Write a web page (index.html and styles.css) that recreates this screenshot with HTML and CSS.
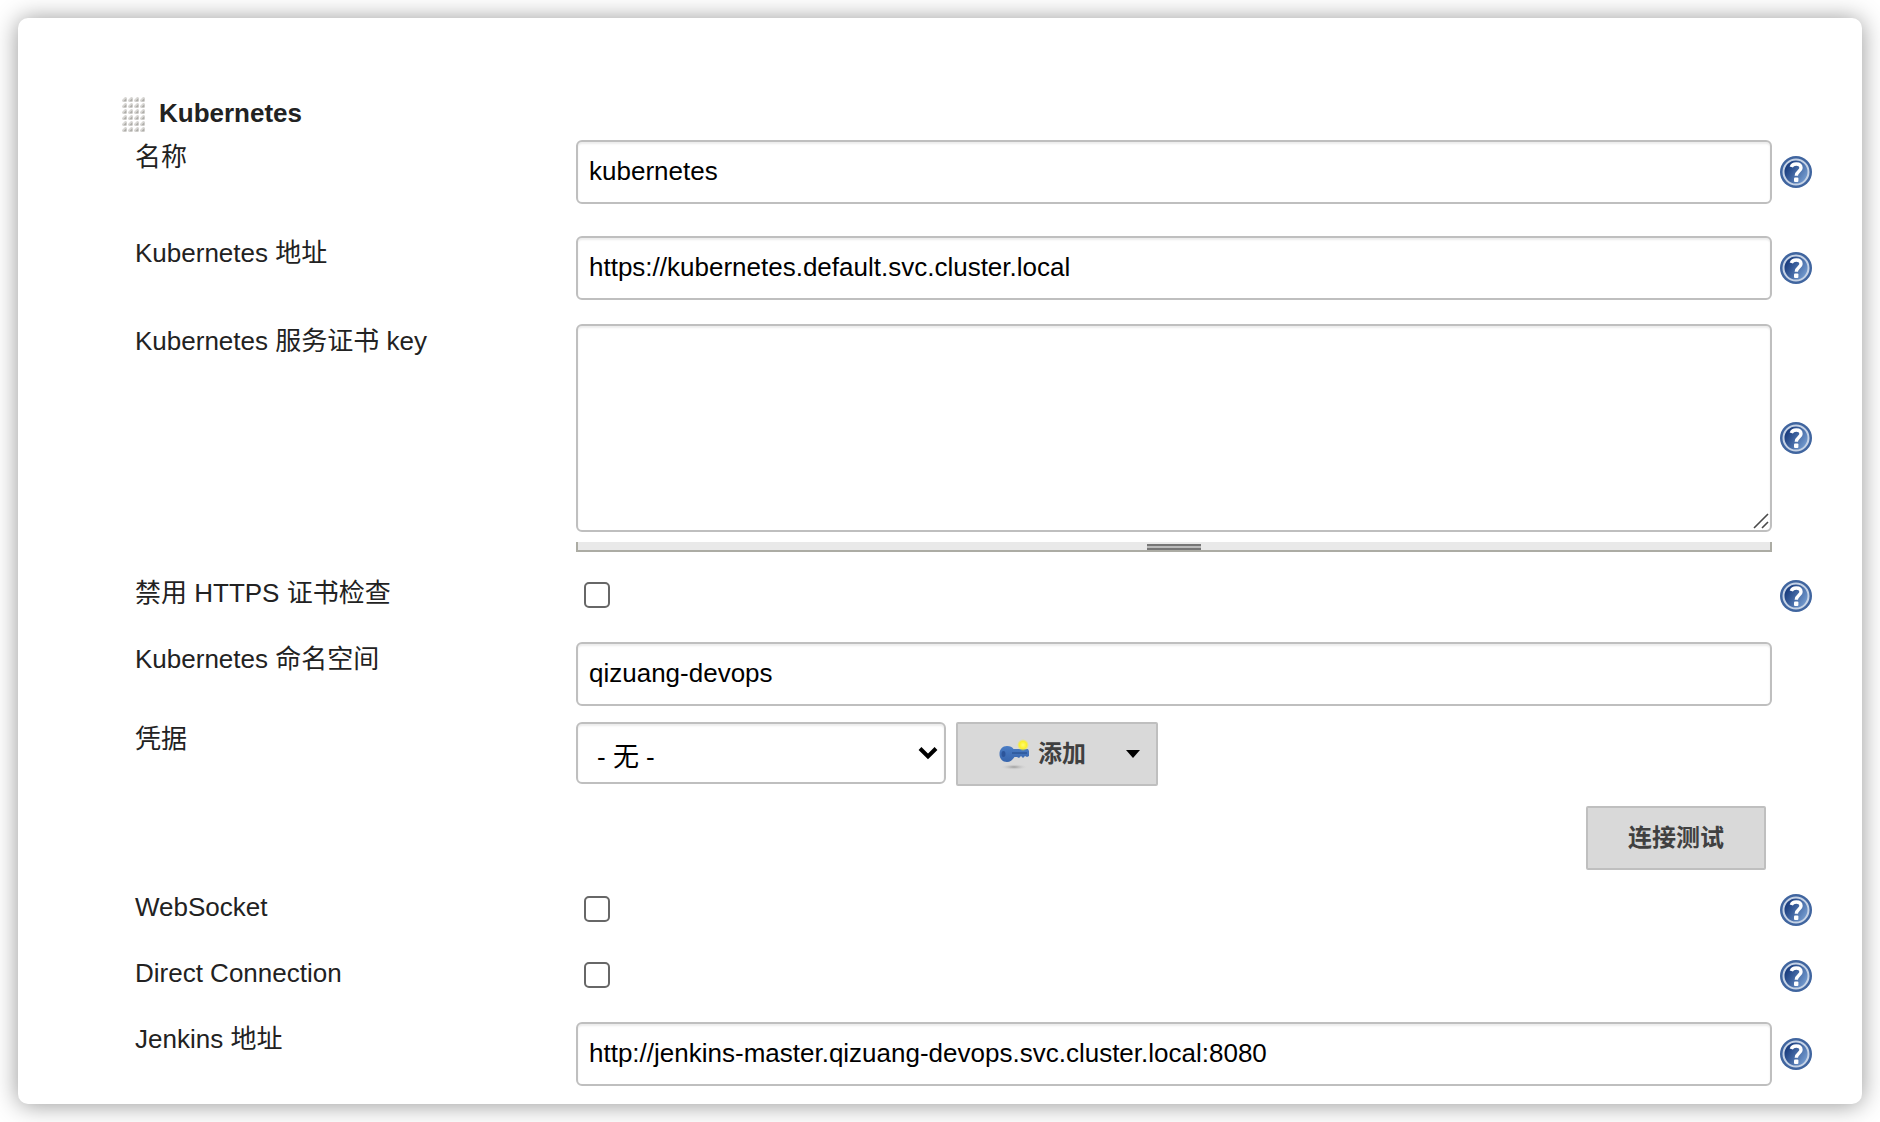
FILE: index.html
```html
<!DOCTYPE html>
<html lang="zh-CN">
<head>
<meta charset="utf-8">
<meta name="viewport" content="width=device-width, initial-scale=1">
<title>Kubernetes</title>
<link rel="stylesheet" href="styles.css">
</head>
<body>
<svg class="defs" aria-hidden="true">
  <defs>
    <linearGradient id="help-fill" x1="0" y1="0.2" x2="1" y2="0.8">
      <stop offset="0.15" stop-color="#1c3f80"/>
      <stop offset="0.9" stop-color="#7299cd"/>
    </linearGradient>
    <linearGradient id="key-fill" x1="0" y1="0" x2="0" y2="1">
      <stop offset="0" stop-color="#4a7cc4"/>
      <stop offset="1" stop-color="#3765ad"/>
    </linearGradient>
    <radialGradient id="spark">
      <stop offset="0" stop-color="#fffb70"/>
      <stop offset="0.6" stop-color="#fbf02c"/>
      <stop offset="1" stop-color="#f5ea3c" stop-opacity="0"/>
    </radialGradient>
    <radialGradient id="key-shadow">
      <stop offset="0" stop-color="#9a9a9a"/>
      <stop offset="1" stop-color="#d9d9d9" stop-opacity="0"/>
    </radialGradient>
    <pattern id="grip-dots" width="6" height="6" patternUnits="userSpaceOnUse">
      <path d="M0 5.500V4L3 1h1.500v4.500z" fill="#d9d8d5"/>
      <path d="M1 5.500L4.500 2v3.500z" fill="#aeada9"/>
    </pattern>
    <symbol id="help" viewBox="0 0 32 32">
      <circle cx="16" cy="16" r="16" fill="#40659f"/>
      <circle cx="16" cy="16" r="12.500" fill="url(#help-fill)" stroke="#c6d3e6" stroke-width="2"/>
      <path d="M11.300 11C12 9 13.800 8 16.200 8c2.800 0 4.800 1.400 4.800 4 0 3.300-4.700 3.300-4.700 7.800" fill="none" stroke="#fff" stroke-width="3.400"/>
      <rect x="14" y="21.500" width="4.400" height="4.400" rx="1" fill="#fff"/>
    </symbol>
  </defs>
</svg>

<main class="card">
  <form>
    <header class="section-head">
      <svg class="grip" viewBox="0 0 24 36" aria-hidden="true"><rect width="24" height="36" fill="url(#grip-dots)"/></svg>
      <h1 class="section-title">Kubernetes</h1>
    </header>

    <div class="row row-loose">
      <label class="label" for="name">名称</label>
      <input class="text-box" id="name" type="text" value="kubernetes">
      <a class="help" href="#name" aria-label="帮助"><svg class="help-icon"><use href="#help"/></svg></a>
    </div>

    <div class="row">
      <label class="label" for="server">Kubernetes 地址</label>
      <input class="text-box" id="server" type="text" value="https://kubernetes.default.svc.cluster.local">
      <a class="help" href="#server" aria-label="帮助"><svg class="help-icon"><use href="#help"/></svg></a>
    </div>

    <div class="row">
      <label class="label" for="cert">Kubernetes 服务证书 key</label>
      <div class="area">
        <div class="area-box">
          <textarea class="text-box text-area" id="cert"></textarea>
          <svg class="resizer" viewBox="0 0 16 16" aria-hidden="true"><path d="M1 15L15 1M9 15L15 9" stroke="#4a4a4a" stroke-width="1.600"/></svg>
        </div>
        <div class="area-handle"><span class="area-grip"></span></div>
      </div>
      <a class="help" href="#cert" aria-label="帮助"><svg class="help-icon"><use href="#help"/></svg></a>
    </div>

    <div class="row row-check">
      <label class="label" for="skip-tls">禁用 HTTPS 证书检查</label>
      <input class="check" id="skip-tls" type="checkbox">
      <a class="help" href="#skip-tls" aria-label="帮助"><svg class="help-icon"><use href="#help"/></svg></a>
    </div>

    <div class="row row-tight">
      <label class="label" for="namespace">Kubernetes 命名空间</label>
      <input class="text-box" id="namespace" type="text" value="qizuang-devops">
    </div>

    <div class="row row-actions">
      <label class="label" for="credentials">凭据</label>
      <div class="credentials">
        <div class="select-wrap">
          <select class="text-box select" id="credentials"><option>- 无 -</option></select>
          <svg class="chevron" viewBox="0 0 20 14" aria-hidden="true"><path d="M2 2.500l8 8 8-8" fill="none" stroke="#000" stroke-width="4"/></svg>
        </div>
        <button class="button button-add" type="button">
          <svg class="key" viewBox="0 0 32 32" aria-hidden="true">
            <ellipse cx="16" cy="29" rx="14" ry="3" fill="url(#key-shadow)"/>
            <path d="M9 8c3 0 5.500 1 6.500 3H30l1 2v5l-2 1-2-1-2 2-2-2-2 2-2-1h-2.500C14.500 22 12 24 9 24c-4.500 0-7.500-3.500-7.500-8S4.500 8 9 8z" fill="url(#key-fill)"/>
            <path d="M14 15h15" stroke="#2d5799" stroke-width="1.500"/>
            <ellipse cx="5.500" cy="16" rx="2" ry="3" fill="#2c559b"/>
            <circle cx="25" cy="7" r="6" fill="url(#spark)"/>
          </svg>
          <span>添加</span>
          <svg class="caret" viewBox="0 0 14 8" aria-hidden="true"><path d="M0 0h14L7 8z"/></svg>
        </button>
      </div>
    </div>

    <div class="test-line row-actions">
      <button class="button" type="button">连接测试</button>
    </div>

    <div class="row row-check">
      <label class="label" for="websocket">WebSocket</label>
      <input class="check" id="websocket" type="checkbox">
      <a class="help" href="#websocket" aria-label="帮助"><svg class="help-icon"><use href="#help"/></svg></a>
    </div>

    <div class="row row-check">
      <label class="label" for="direct">Direct Connection</label>
      <input class="check" id="direct" type="checkbox">
      <a class="help" href="#direct" aria-label="帮助"><svg class="help-icon"><use href="#help"/></svg></a>
    </div>

    <div class="row row-last">
      <label class="label" for="jenkins">Jenkins 地址</label>
      <input class="text-box" id="jenkins" type="text" value="http://jenkins-master.qizuang-devops.svc.cluster.local:8080">
      <a class="help" href="#jenkins" aria-label="帮助"><svg class="help-icon"><use href="#help"/></svg></a>
    </div>
  </form>
</main>
</body>
</html>
```
FILE: styles.css
```css
* {
  box-sizing: border-box;
}

body {
  margin: 0;
  padding: 18px;
  background: #fff;
  color: #222;
  font-family: "Liberation Sans", "Noto Sans CJK SC", sans-serif;
  font-size: 26px;
  line-height: 34px;
}

.defs {
  position: absolute;
  width: 0;
  height: 0;
}

.card {
  padding: 78px 50px 18px 104px;
  background: #fff;
  border-radius: 10px;
  box-shadow: 0 1px 24px rgba(0, 0, 0, 0.42);
}

.section-head {
  display: flex;
  align-items: flex-start;
  gap: 13px;
  height: 36px;
  margin-bottom: 8px;
}

.grip {
  width: 24px;
  height: 36px;
}

.section-title {
  margin: 0;
  font-size: 26px;
  line-height: 34px;
}

.row {
  display: grid;
  grid-template-columns: 433px minmax(0, 1fr) 32px;
  column-gap: 8px;
  align-items: center;
  margin: 0 0 24px 13px;
}

.row-loose {
  margin-bottom: 32px;
}

.row-tight {
  margin-bottom: 16px;
}

.row-actions {
  margin-bottom: 20px;
}

.row-check {
  min-height: 40px;
  margin-bottom: 26px;
}

.row-last {
  margin-bottom: 0;
}

.label {
  align-self: start;
}

.text-box {
  display: block;
  width: 100%;
  height: 64px;
  margin: 0;
  padding: 0 11px 2px;
  background: #fff;
  border: 2px solid #bfbfbf;
  border-radius: 6px;
  box-shadow: inset 0 2px 2px rgba(0, 0, 0, 0.08);
  color: #000;
  font: inherit;
}

.area-box {
  position: relative;
}

.text-area {
  height: 208px;
  resize: none;
}

.resizer {
  position: absolute;
  right: 3px;
  bottom: 3px;
  width: 16px;
  height: 16px;
}

.area-handle {
  height: 10px;
  margin-top: 10px;
  background: #e9e9e9;
  border: solid #acaca4;
  border-width: 0 2px 2px;
}

.area-grip {
  display: block;
  width: 54px;
  height: 8px;
  margin: 0 auto;
  background: linear-gradient(#e9e9e9 2px, #777 2px 4px, #bbb 4px 6px, #777 6px);
}

.help,
.help-icon {
  display: block;
  width: 32px;
  height: 32px;
}

.check {
  appearance: none;
  width: 26px;
  height: 26px;
  margin: 0 0 2px 8px;
  background: #fff;
  border: 2px solid #676767;
  border-radius: 5px;
}

.check:checked {
  background: #2f6fd0;
}

.credentials {
  display: flex;
  align-items: flex-start;
  gap: 10px;
}

.select-wrap {
  position: relative;
  width: 370px;
}

.select {
  appearance: none;
  height: 62px;
  padding: 8px 40px 0 19px;
}

.chevron {
  position: absolute;
  top: 24px;
  right: 8px;
  width: 20px;
  height: 14px;
  pointer-events: none;
}

.button {
  display: flex;
  align-items: center;
  height: 64px;
  margin: 0;
  padding: 0 40px;
  background: #d9d9d9;
  border: 2px solid #bfbfbf;
  border-radius: 2px;
  color: #404040;
  font: inherit;
  font-size: 24px;
  font-weight: 700;
}

.button-add {
  padding: 0 16px 0 40px;
}

.key {
  width: 32px;
  height: 32px;
  margin-right: 8px;
}

.caret {
  width: 14px;
  height: 8px;
  margin-left: 40px;
}

.test-line {
  display: flex;
  justify-content: flex-end;
  margin-right: 46px;
}
```
